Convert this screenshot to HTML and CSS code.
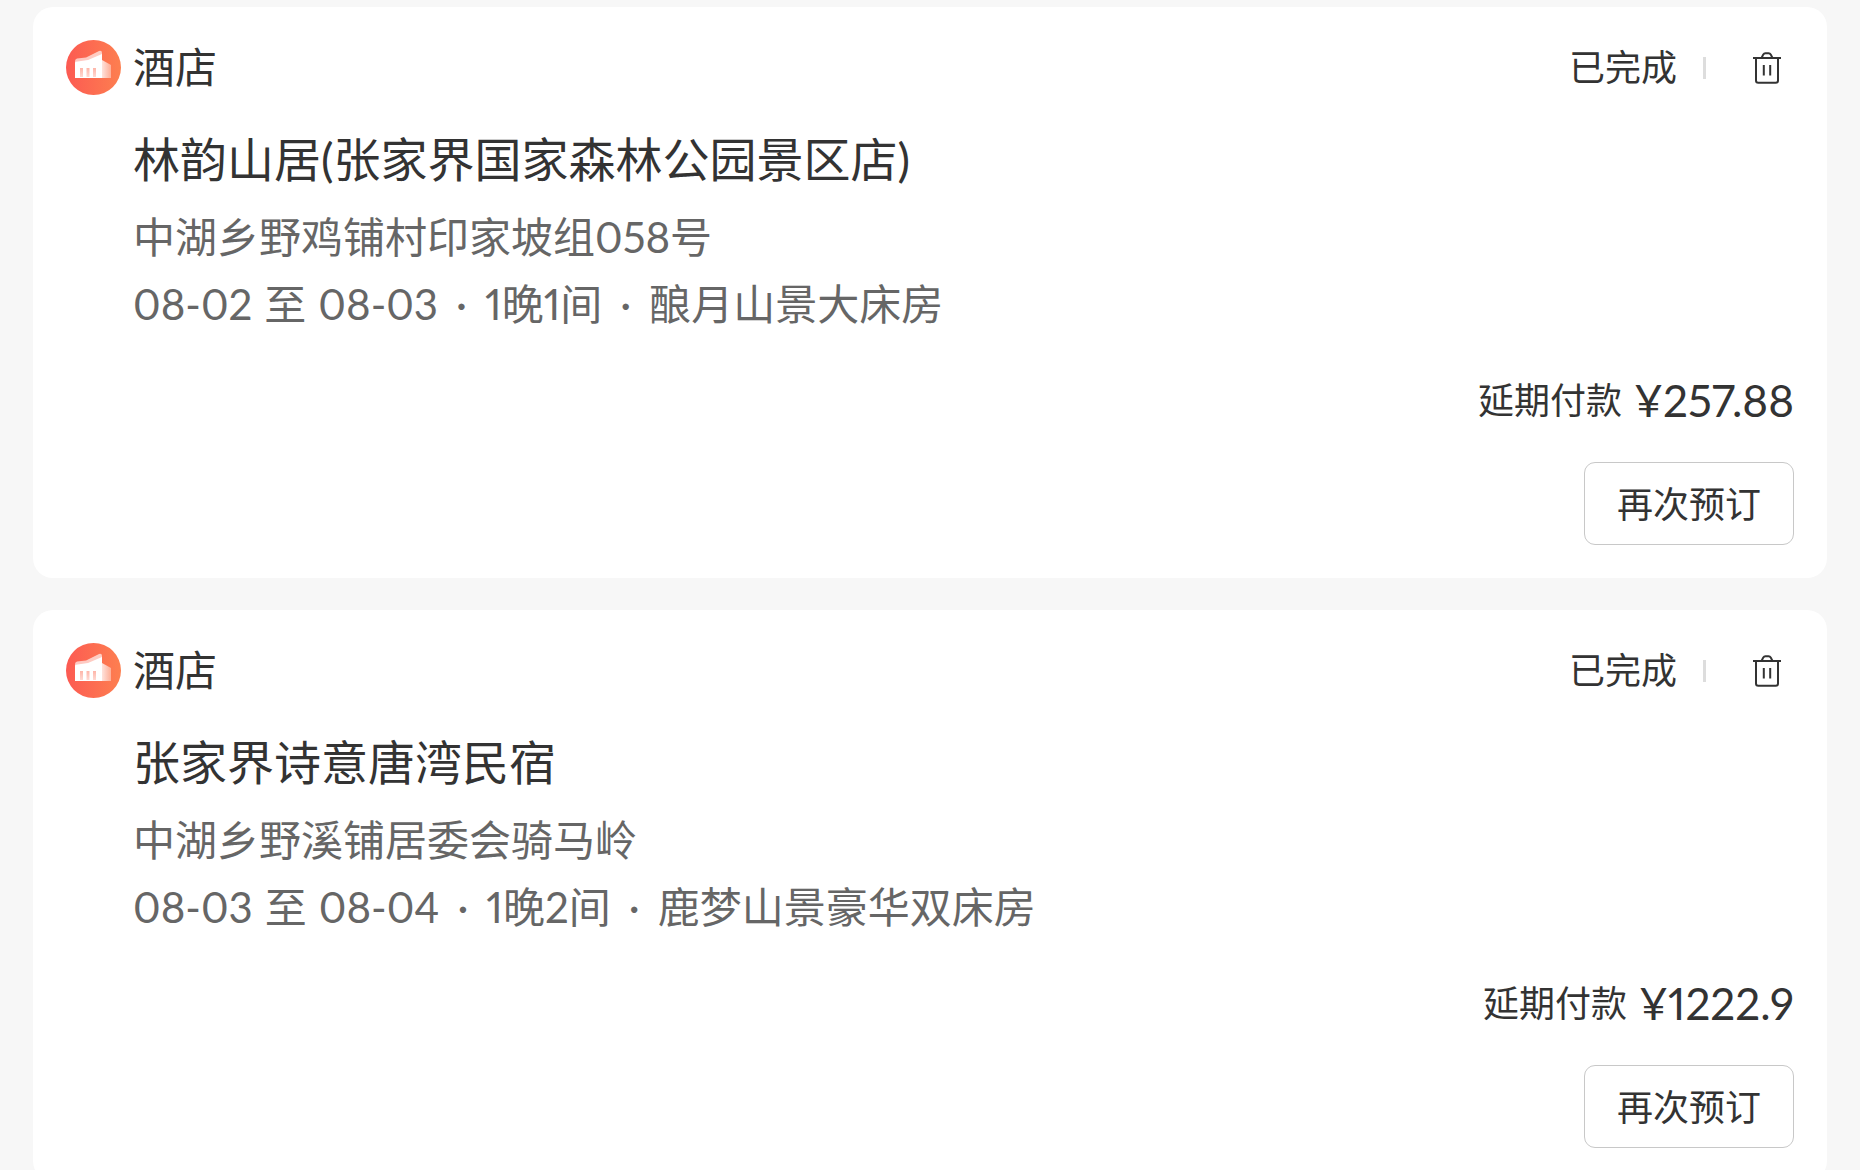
FILE: index.html
```html
<!DOCTYPE html>
<html lang="zh-CN">
<head>
    <meta charset="UTF-8">
    <meta name="viewport" content="width=device-width, initial-scale=1.0">
    <title>我的订单</title>
    <link rel="stylesheet" href="styles.css">
</head>
<body>

<!-- Shared icons -->
<svg class="icon-defs" aria-hidden="true">
    <defs>
        <linearGradient id="hotel-bg" x1="0" y1="0" x2="1" y2="0">
            <stop offset="0" stop-color="#fc5a52"/>
            <stop offset="1" stop-color="#fd7f50"/>
        </linearGradient>
        <linearGradient id="hotel-side" x1="0" y1="0" x2="1" y2="0">
            <stop offset="0" stop-color="#fff" stop-opacity="0.8"/>
            <stop offset="1" stop-color="#fff" stop-opacity="0.4"/>
        </linearGradient>
        <linearGradient id="hotel-window" x1="0" y1="0" x2="0" y2="1">
            <stop offset="0" stop-color="#fd6b51" stop-opacity="0.5"/>
            <stop offset="1" stop-color="#fd6b51" stop-opacity="0.25"/>
        </linearGradient>
    </defs>
    <symbol id="icon-hotel" viewBox="0 0 55 55">
        <circle cx="27.500" cy="27.500" r="27.500" fill="url(#hotel-bg)"/>
        <path d="M36 20 L45 25 V38 H36 Z" fill="url(#hotel-side)"/>
        <path d="M9 21 Q9 19 11 18.500 L20 17.500 L33 11 Q36 10 36 13 V38 H9 Z" fill="#fff" opacity="0.650"/>
        <path d="M9 23 Q9 22 10 21.800 L22 20 L36 14 V38 H9 Z" fill="#fff"/>
        <path d="M14 28 h3 v9 h-3 z M20.500 28 h3 v9 h-3 z M27 28 h3 v9 h-3 z" fill="url(#hotel-window)"/>
    </symbol>
    <symbol id="icon-trash" viewBox="0 0 28 32">
        <g fill="none" stroke="#333" stroke-width="2">
            <path d="M0 6 H28"/>
            <path d="M8.500 6 L10.300 2.400 Q11 1.200 12.400 1.200 H15.600 Q17 1.200 17.700 2.400 L19.500 6"/>
            <path d="M3 6 V28.500 Q3 30.800 5.300 30.800 H22.700 Q25 30.800 25 28.500 V6"/>
            <path d="M10.800 13 V23.500 M17.200 13 V23.500"/>
        </g>
    </symbol>
</svg>

<main class="order-list">
    <article class="order-card">
        <header class="order-header">
            <svg class="hotel-icon" aria-hidden="true"><use href="#icon-hotel"/></svg>
            <span class="order-type">酒店</span>
            <span class="order-status">已完成</span>
            <span class="divider"></span>
            <button type="button" class="delete-btn" aria-label="删除订单">
                <svg aria-hidden="true"><use href="#icon-trash"/></svg>
            </button>
        </header>
        <div class="order-info">
            <h2>林韵山居(张家界国家森林公园景区店)</h2>
            <p>中湖乡野鸡铺村印家坡组058号</p>
            <p class="stay">
                <span class="dates"><time>08-02</time> 至 <time>08-03</time></span>
                <span>·</span>
                <span>1晚1间</span>
                <span>·</span>
                <span>酿月山景大床房</span>
            </p>
        </div>
        <div class="order-pay">
            <span>延期付款</span>
            <span class="price">¥257.88</span>
        </div>
        <div class="order-actions">
            <button type="button" class="rebook-btn">再次预订</button>
        </div>
    </article>

    <article class="order-card">
        <header class="order-header">
            <svg class="hotel-icon" aria-hidden="true"><use href="#icon-hotel"/></svg>
            <span class="order-type">酒店</span>
            <span class="order-status">已完成</span>
            <span class="divider"></span>
            <button type="button" class="delete-btn" aria-label="删除订单">
                <svg aria-hidden="true"><use href="#icon-trash"/></svg>
            </button>
        </header>
        <div class="order-info">
            <h2>张家界诗意唐湾民宿</h2>
            <p>中湖乡野溪铺居委会骑马岭</p>
            <p class="stay">
                <span class="dates"><time>08-03</time> 至 <time>08-04</time></span>
                <span>·</span>
                <span>1晚2间</span>
                <span>·</span>
                <span>鹿梦山景豪华双床房</span>
            </p>
        </div>
        <div class="order-pay">
            <span>延期付款</span>
            <span class="price">¥1222.9</span>
        </div>
        <div class="order-actions">
            <button type="button" class="rebook-btn">再次预订</button>
        </div>
    </article>
</main>

</body>
</html>
```
FILE: styles.css
```css
* {
    box-sizing: border-box;
}

body {
    margin: 0;
    background-color: #f7f7f7;
    color: #333;
    font-family: Lato, "Noto Sans CJK SC", sans-serif;
    font-size: 36px;
    font-variant-numeric: proportional-nums;
}

button {
    font: inherit;
    color: inherit;
    background: none;
    cursor: pointer;
}

.icon-defs {
    position: absolute;
    width: 0;
    height: 0;
}

.order-list {
    display: flex;
    flex-direction: column;
    gap: 32px;
    padding: 7px 33px 32px;
}

.order-card {
    padding: 33px;
    background-color: #fff;
    border-radius: 20px;
}

/* Card header */
.order-header {
    display: flex;
    align-items: center;
    height: 55px;
}

.hotel-icon {
    width: 55px;
    height: 55px;
    margin-right: 12px;
}

.order-type {
    font-size: 42px;
    line-height: 55px;
}

.order-status {
    margin-left: auto;
    line-height: 55px;
}

.divider {
    width: 3px;
    height: 22px;
    margin: 0 34px 0 26px;
    background-color: #ddd;
}

.delete-btn {
    padding: 13px;
    border: none;
}

.delete-btn svg {
    display: block;
    width: 28px;
    height: 32px;
}

/* Hotel details */
.order-info {
    margin-top: 34px;
    padding-left: 67px;
}

h2 {
    margin: 0 0 15px;
    font-size: 47px;
    font-weight: 400;
    line-height: 60px;
}

p {
    margin: 0;
    color: #666;
    font-size: 42px;
    line-height: 67px;
}

.stay {
    display: flex;
    gap: 18px;
}

.dates {
    display: flex;
    gap: 12px;
}

/* Payment and actions */
.order-pay {
    display: flex;
    justify-content: flex-end;
    align-items: center;
    gap: 12px;
    margin-top: 32px;
    line-height: 60px;
}

.price {
    font-size: 44px;
}

.order-actions {
    display: flex;
    justify-content: flex-end;
    margin-top: 32px;
}

.rebook-btn {
    height: 83px;
    padding: 0 32px 4px;
    border: 1px solid #c8c8c8;
    border-radius: 11px;
}
```
